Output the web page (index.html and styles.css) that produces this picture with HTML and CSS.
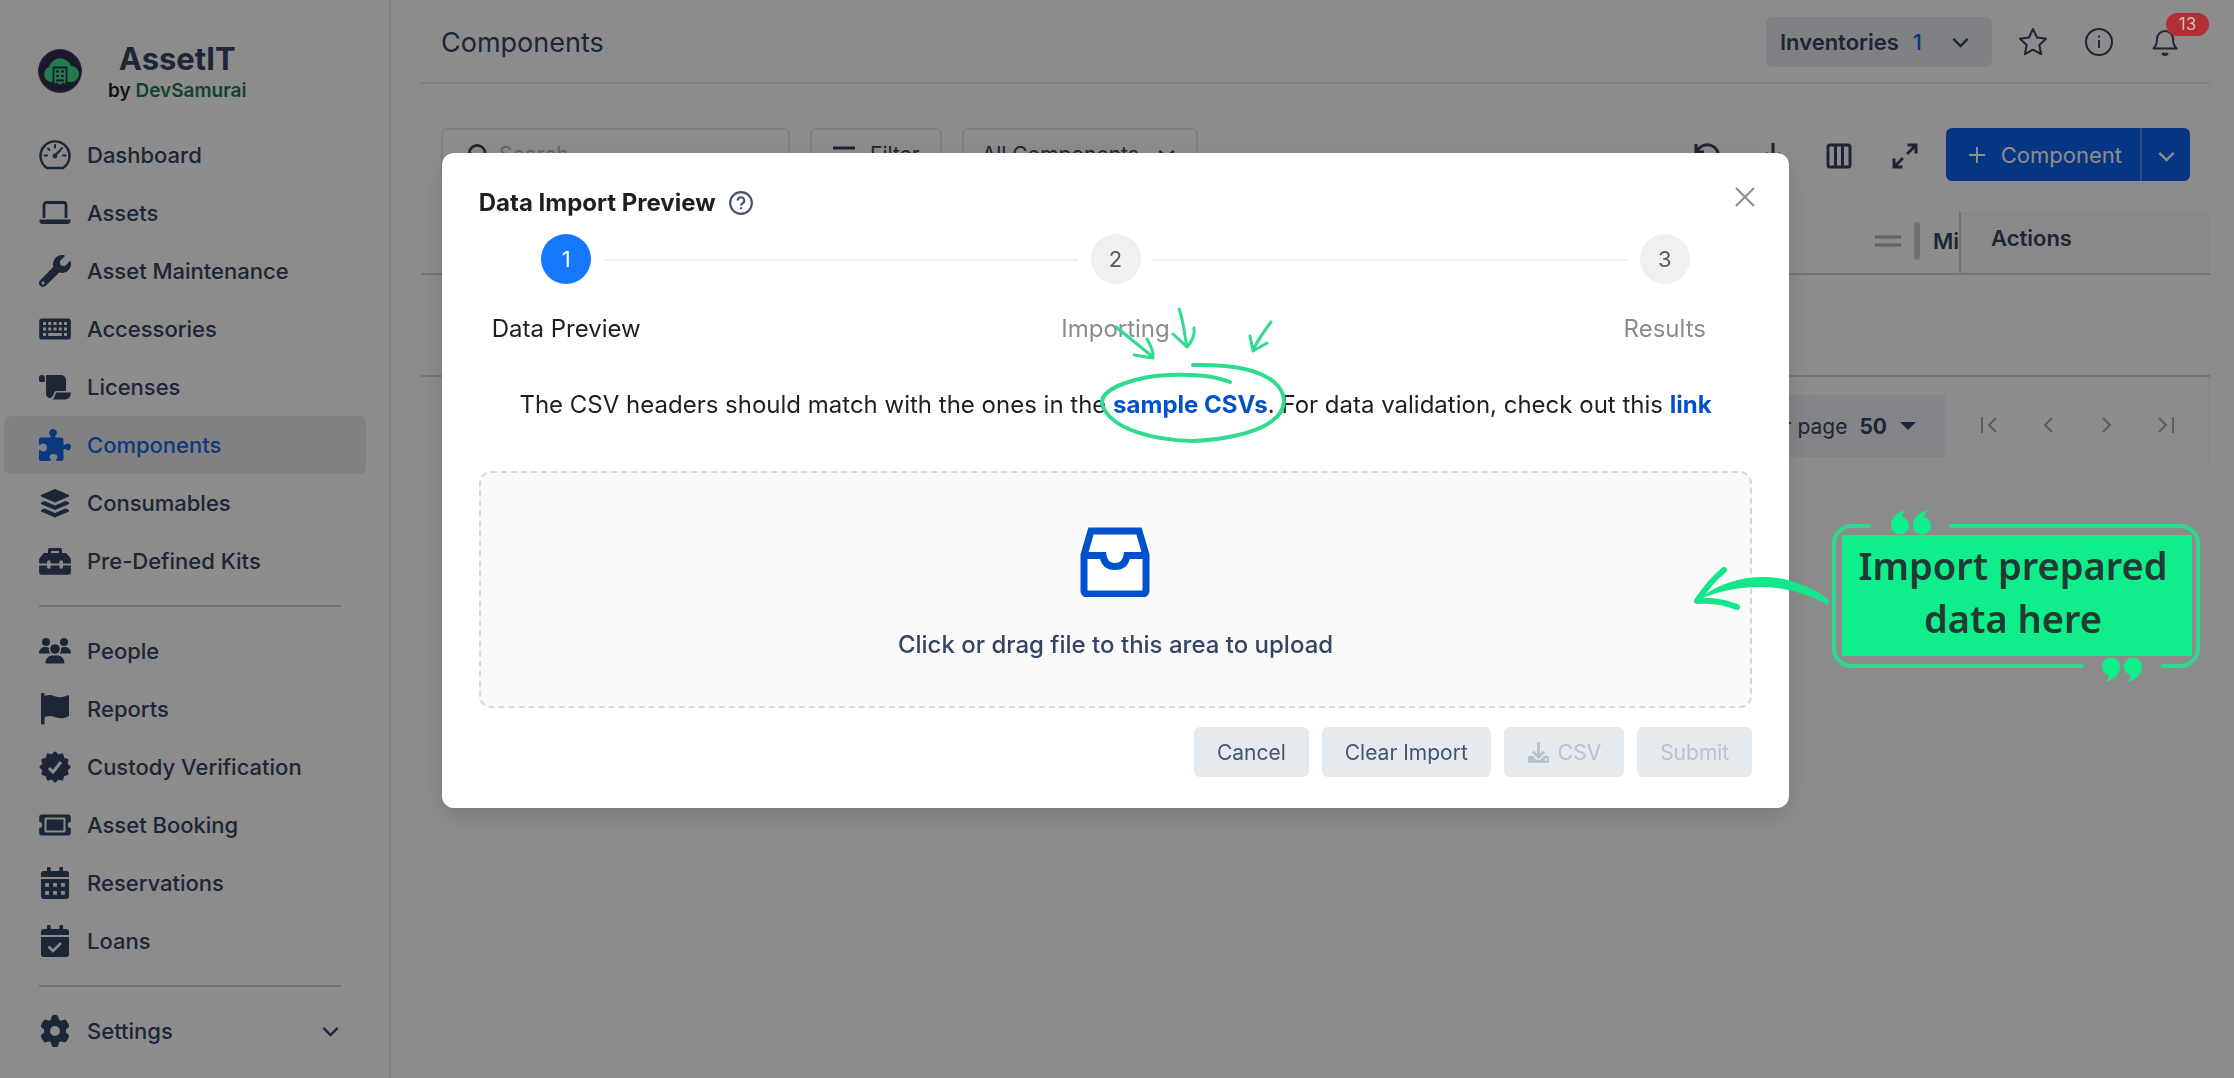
FILE: index.html
```html
<!DOCTYPE html>
<html lang="en">
<head>
  <meta charset="UTF-8" />
  <meta name="viewport" content="width=device-width, initial-scale=1.0" />
  <title>AssetIT - Components</title>
  <link rel="stylesheet" href="styles.css">
</head>
<body>
  <div class="app">
    <aside class="sidebar">
      <div class="brand">
        <svg class="brand-logo" viewBox="0 0 44 44">
          <circle cx="22" cy="22" r="21.500" fill="#302c50" stroke="#6a4a78" />
          <path d="M12 33a8 8 0 0 1-1-15 11.500 11.500 0 0 1 22-1 8 8 0 0 1 0 16z" fill="#40e08c" />
          <path d="M15.500 18.500h13v18l-3-2-3.500 2-3.500-2-3 2z" fill="#40e08c" stroke="#302c50" stroke-width="1.800" />
          <path d="M18 22.500h3M23 22.500h3M18 27h3M23 27h3M18 31.500h8" stroke="#302c50" stroke-width="2" />
        </svg>
        <div class="brand-text">
          <div class="brand-name">AssetIT</div>
          <div class="brand-by">by <span>DevSamurai</span></div>
        </div>
      </div>

      <nav class="nav">
        <a href="#"><svg class="icon" viewBox="0 0 32 32"><path d="M8 29a14.500 14.500 0 1 1 16 0z" fill="none" stroke="currentColor" stroke-width="2.400" stroke-linejoin="round" /><path d="M16 16.500l5-5" stroke="currentColor" stroke-width="2.400" stroke-linecap="round" /><circle cx="16" cy="17" r="2.400" /><path d="M16 6v2.500M9 9.500l1.500 1.500M5.500 16.500H8M24 16.500h2.500M23 9l-1 1" stroke="currentColor" stroke-width="2" stroke-linecap="round" /></svg>Dashboard</a>
        <a href="#"><svg class="icon" viewBox="0 0 32 32"><path d="M5 21V8a2.500 2.500 0 0 1 2.500-2.500h17A2.500 2.500 0 0 1 27 8v13" fill="none" stroke="currentColor" stroke-width="2.800" /><path d="M.5 22.500h31v1.500a3 3 0 0 1-3 3h-25a3 3 0 0 1-3-3z" /></svg>Assets</a>
        <a href="#"><svg class="icon" viewBox="0 0 512 512"><path fill-rule="evenodd" d="M507.700 109.100c-2.200-9-13.500-12.100-20.100-5.500l-74.400 74.400-67.900-11.300L334 98.900l74.400-74.400c6.600-6.600 3.400-17.900-5.700-20.200-47.400-11.700-99.600.9-136.600 37.900-39.600 39.600-50.500 97.100-34.100 147.200L18.700 402.800c-25 25-25 65.500 0 90.500s65.500 25 90.500 0l213.200-213.200c50.100 16.700 107.500 5.700 147.400-34.200 37.100-37.100 49.700-89.300 37.900-136.800zM64 472c-13.200 0-24-10.700-24-24s10.700-24 24-24 24 10.700 24 24-10.700 24-24 24z" /></svg>Asset Maintenance</a>
        <a href="#"><svg class="icon" viewBox="0 0 32 32"><path fill-rule="evenodd" d="M3 5.500h26a2.800 2.800 0 0 1 2.800 2.800v15.400a2.800 2.800 0 0 1-2.800 2.800H3a2.800 2.800 0 0 1-2.800-2.800V8.300A2.800 2.800 0 0 1 3 5.500zM4 9v3h3V9zm5.200 0v3h3V9zm5.300 0v3h3V9zm5.300 0v3h3V9zM25 9v3h3V9zM4 14.500v3h3v-3zm5.200 0v3h3v-3zm5.300 0v3h3v-3zm5.300 0v3h3v-3zm5.200 0v3h3v-3zM4 20v3h3v-3zm5.200 0v3h13.600v-3zM25 20v3h3v-3z" /></svg>Accessories</a>
        <a href="#"><svg class="icon" viewBox="0 0 32 32"><path d="M3 4a2.800 2.800 0 0 1 2.800 2.800V11H1.500A1.500 1.500 0 0 1 0 9.500V6.800A2.800 2.800 0 0 1 3 4zM7 4h15a5 5 0 0 1 5 5v11H17c-2 0-2 4-4 6-2 2-6 .5-6-3z" /><path d="M18 21.500h13.800c0 4-2 7-6 7H13.500c2.500-1 2.500-7 4.500-7z" /></svg>Licenses</a>
        <a href="#" class="active"><svg class="icon" viewBox="0 0 32 32"><path d="M0 11a2.500 2.500 0 0 1 2.500-2.500H11c1 0 1-1.500.2-2.300C8.500 3.500 11 0 14 0s5.500 3.500 2.800 6.200c-.8.800-.8 2.300.2 2.300h5A2.500 2.500 0 0 1 24.500 11v4c0 1 1.300 1.200 2.200.5 2.500-2.200 5.300-.3 5.300 2.500s-2.800 4.700-5.300 2.500c-.9-.7-2.200-.5-2.200.5v8.500A2.500 2.500 0 0 1 22 32h-4c-1 0-1.200-1.200-.5-2 2.500-2.800 0-5-3-5s-5.500 2.200-3 5c.7.800.5 2-.5 2H2.500A2.500 2.500 0 0 1 0 29.500V22c0-1 1.200-1.300 2-.5 3 2.500 6 0 6-3s-3-5.500-6-3c-.8.800-2 .5-2-.5z" /></svg>Components</a>
        <a href="#"><svg class="icon" viewBox="0 0 32 32"><path d="M16 2l13.500 5.800c1 .5 1 1.400 0 1.900L16 15.500 2.500 9.700c-1-.5-1-1.400 0-1.900zM5.500 14L16 18.500 26.500 14l3 1.300c1 .5 1 1.400 0 1.900L16 23 2.500 17.200c-1-.5-1-1.400 0-1.900zM5.500 21.500L16 26l10.500-4.500 3 1.300c1 .5 1 1.400 0 1.900L16 30.500 2.500 24.700c-1-.5-1-1.400 0-1.900z" /></svg>Consumables</a>
        <a href="#"><svg class="icon" viewBox="0 0 32 32"><path d="M10.500 8V4.500h11V8" fill="none" stroke="currentColor" stroke-width="3" stroke-linejoin="round" /><path d="M5 8h22l4 4.500c.6.700.9 1.500.9 2.500v3.500H24V17a1.800 1.800 0 0 0-3.600 0v1.500h-8.800V17A1.800 1.800 0 0 0 8 17v1.500H.1V15c0-1 .3-1.800.9-2.500zM.1 20.500H8V22a1.800 1.800 0 0 0 3.600 0v-1.500h8.800V22a1.800 1.800 0 0 0 3.600 0v-1.500h7.900v6.700a2.500 2.500 0 0 1-2.500 2.500H2.600a2.500 2.500 0 0 1-2.500-2.500z" /></svg>Pre-Defined Kits</a>
      </nav>
      <hr class="divider">
      <nav class="nav">
        <a href="#"><svg class="icon" viewBox="0 0 32 32"><circle cx="7" cy="7" r="4" /><circle cx="25" cy="7" r="4" /><circle cx="16" cy="14" r="4.800" /><path d="M0 18.500c0-4 2.500-6.500 6-6.500 1.500 0 3 .3 4 1-.5 2.500.2 4.500 1.500 5.500zM32 18.500c0-4-2.500-6.500-6-6.500-1.500 0-3 .3-4 1 .5 2.500-.2 4.500-1.500 5.500zM6.500 28.500c0-5 3-8 7-8h5c4 0 7 3 7 8z" /></svg>People</a>
        <a href="#"><svg class="icon" viewBox="0 0 32 32"><path d="M2 1.500a1.800 1.800 0 0 1 3.600 0V3c3-1.200 6-1.500 10 .2 4 1.600 8 1.500 12.400-.7 1.200-.5 2 .1 2 1.500v19c-5 3-9 2.800-13.500 1.200-4-1.400-7-1.400-10.900-.2V30A1.800 1.800 0 0 1 2 30z" /></svg>Reports</a>
        <a href="#"><svg class="icon" viewBox="0 0 32 32"><path d="M16 2L18.900 5 22.900 3.900 24 8 28.100 9.100 27 13 30 16 27 19 28.100 22.900 24 24 22.900 28.100 18.900 27 16 30 13.100 27 9.100 28.100 8 24 3.900 22.900 5 19 2 16 5 13 3.900 9.100 8 8 9.100 3.900 13.100 5z" stroke="currentColor" stroke-width="3" stroke-linejoin="round" /><path d="M10 17l4 4 8-10" fill="none" stroke="#fff" stroke-width="3" /></svg>Custody Verification</a>
        <a href="#"><svg class="icon" viewBox="0 0 32 32"><path fill-rule="evenodd" d="M3 5.500h26a2.800 2.800 0 0 1 2.800 2.800V13a3 3 0 0 0 0 6v4.700a2.800 2.800 0 0 1-2.800 2.800H3a2.800 2.800 0 0 1-2.800-2.800V19a3 3 0 0 0 0-6V8.300A2.800 2.800 0 0 1 3 5.500zM5.500 10v12a1.500 1.500 0 0 0 1.500 1.500h18a1.500 1.500 0 0 0 1.500-1.500V10A1.500 1.500 0 0 0 25 8.500H7A1.500 1.500 0 0 0 5.500 10zM7.500 10.500h17v11h-17z" /></svg>Asset Booking</a>
        <a href="#"><svg class="icon" viewBox="0 0 32 32"><path fill-rule="evenodd" d="M8 1.500a1.800 1.800 0 0 1 3.600 0V4h8.800V1.500a1.800 1.800 0 0 1 3.600 0V4h3a3 3 0 0 1 3 3v3H2V7a3 3 0 0 1 3-3h3zM2 12h28v17a3 3 0 0 1-3 3H5a3 3 0 0 1-3-3zm4.200 4v3.800H10V16zm7.900 0v3.800h3.800V16zm7.900 0v3.800h3.800V16zM6.200 24v3.800H10V24zm7.900 0v3.800h3.800V24zm7.900 0v3.800h3.800V24z" /></svg>Reservations</a>
        <a href="#"><svg class="icon" viewBox="0 0 32 32"><path d="M8 1.500a1.800 1.800 0 0 1 3.600 0V4h8.800V1.500a1.800 1.800 0 0 1 3.600 0V4h3a3 3 0 0 1 3 3v3H2V7a3 3 0 0 1 3-3h3zM2 12h28v17a3 3 0 0 1-3 3H5a3 3 0 0 1-3-3z" /><path d="M9.500 21.500l4.500 4.500 8-8" fill="none" stroke="#fff" stroke-width="2.600" /></svg>Loans</a>
      </nav>
      <hr class="divider">
      <nav class="nav">
        <a href="#"><svg class="icon" viewBox="0 0 32 32"><path fill-rule="evenodd" d="M12.800 1.500C13 .5 14 0 16 0s3 .5 3.200 1.500l.8 3.200 1.800 1 3.200-1c1-.3 2 .2 2.700 1.200l2 3.600c.6 1.200.5 2-.2 2.700L27 14.500v3l2.500 2.300c.7.700.8 1.500.2 2.700l-2 3.600c-.7 1-1.700 1.500-2.700 1.200l-3.200-1-1.800 1-.8 3.200c-.2 1-1.200 1.500-3.200 1.500s-3-.5-3.200-1.500l-.8-3.200-1.800-1-3.200 1c-1 .3-2-.2-2.700-1.200l-2-3.600c-.6-1.200-.5-2 .2-2.700L5 17.500v-3l-2.500-2.300c-.7-.7-.8-1.500-.2-2.700l2-3.600C5 4.900 6 4.400 7 4.700l3.200 1 1.800-1zM16 11a5 5 0 1 0 0 10 5 5 0 0 0 0-10z" /></svg>Settings<svg class="chevron" viewBox="0 0 16 16"><path d="M2 5l6 6 6-6" /></svg></a>
      </nav>
    </aside>

    <main class="main">
      <header class="header">
        <h1>Components</h1>
        <div class="header-actions">
          <button class="inventories">Inventories <span>1</span><svg class="chevron" viewBox="0 0 16 16"><path d="M2 5l6 6 6-6" /></svg></button>
          <button class="icon-btn" aria-label="Favourites"><svg viewBox="0 0 30 30"><path d="M15 2l4 8.500 9 1.200-6.600 6.300 1.700 9.200-8.100-4.500-8.100 4.500L8.600 18 2 11.700l9-1.200z" stroke-linejoin="round" /></svg></button>
          <button class="icon-btn" aria-label="Information"><svg viewBox="0 0 30 30"><circle cx="15" cy="15" r="13" /><path d="M15 13v8M15 8.500v2" /></svg></button>
          <button class="icon-btn" aria-label="Notifications"><svg viewBox="0 0 30 30"><path d="M3.500 21.500c3-3 3.500-6 3.500-9.500a8 8 0 0 1 16 0c0 3.500.5 6.500 3.500 9.500z" stroke-linejoin="round" /><path d="M12.500 26c1 2 4 2 5 0" stroke-width="3" /></svg><span class="badge">13</span></button>
        </div>
      </header>

      <div class="toolbar">
        <label class="search">
          <svg viewBox="0 0 26 26"><circle cx="11" cy="11" r="8.500" /><path d="M17 17l7 7" /></svg>
          <input type="text" placeholder="Search" aria-label="Search">
        </label>
        <button class="outline-btn"><svg class="bars" viewBox="0 0 24 24"><path d="M1 5h22M4 12h16M8 19h8" /></svg>Filter</button>
        <button class="outline-btn all-components">All Components<svg class="chevron" viewBox="0 0 16 16"><path d="M2 5l6 6 6-6" /></svg></button>
        <div class="tools">
          <button class="tool" aria-label="Undo"><svg viewBox="0 0 26 26"><path d="M2 1v8h8M3 9A11 11 0 1 1 5 20" /></svg></button>
          <button class="tool" aria-label="Download"><svg viewBox="0 0 26 26"><path d="M13 0v16M6 10l7 7 7-7M2 24h22" /></svg></button>
          <button class="tool" aria-label="Columns"><svg viewBox="0 0 26 26"><rect x="2" y="2" width="22" height="22" rx="2" /><path d="M9.500 2v22M16.500 2v22" /></svg></button>
          <button class="tool" aria-label="Expand"><svg viewBox="0 0 26 26"><path d="M15.500 2H24v8.500M24 2l-9 9M2 15.500V24h8.500M2 24l9-9" /></svg></button>
          <div class="split-btn">
            <button class="add"><svg viewBox="0 0 18 18"><path d="M9 1v16M1 9h16" /></svg>Component</button>
            <button class="more" aria-label="More"><svg class="chevron" viewBox="0 0 16 16"><path d="M2 5l6 6 6-6" /></svg></button>
          </div>
        </div>
      </div>

      <table class="table">
        <thead>
          <tr>
            <th><div class="col-min"><svg viewBox="0 0 26 12"><path d="M0 2h26M0 10h26" /></svg><i></i>Mi</div></th>
            <th class="col-actions">Actions</th>
          </tr>
        </thead>
        <tbody>
          <tr><td colspan="2"></td></tr>
        </tbody>
      </table>

      <div class="pagination">
        <button class="per-page">Rows per page <b>50</b><svg viewBox="0 0 16 8"><path d="M0 0h16L8 8z" /></svg></button>
        <button class="page-btn" aria-label="First page"><svg viewBox="0 0 18 18"><path d="M2 1v16M16 2L9 9l7 7" /></svg></button>
        <button class="page-btn" aria-label="Previous page"><svg viewBox="0 0 18 18"><path d="M13 2L6 9l7 7" /></svg></button>
        <button class="page-btn" aria-label="Next page"><svg viewBox="0 0 18 18"><path d="M5 2l7 7-7 7" /></svg></button>
        <button class="page-btn" aria-label="Last page"><svg viewBox="0 0 18 18"><path d="M16 1v16M2 2l7 7-7 7" /></svg></button>
      </div>
    </main>
  </div>

  <div class="mask">
    <section class="modal" role="dialog" aria-labelledby="modal-title">
      <button class="close" aria-label="Close"><svg viewBox="0 0 20 20"><path d="M1 1l18 18M19 1L1 19" /></svg></button>
      <h2 id="modal-title">Data Import Preview <svg viewBox="0 0 24 24"><circle cx="12" cy="12" r="10" /><path d="M9 9.800a3 3 0 1 1 4.300 2.600c-.9.500-1.300 1-1.300 2M12 16v1.800" /></svg></h2>

      <ol class="steps">
        <li class="step current"><span>1</span>Data Preview</li>
        <li class="line"></li>
        <li class="step"><span>2</span>Importing</li>
        <li class="line"></li>
        <li class="step"><span>3</span>Results</li>
      </ol>

      <p class="hint">The CSV headers should match with the ones in the <span class="marked"><a href="#">sample CSVs</a><svg class="scribble" viewBox="0 0 190 145">
            <path d="M16 25L53 55M34 53l19 3c1-7-3-14-6-19" />
            <path d="M79 7c5 13 5 25 8 37M73 32l14 13c5-5 8-13 7-19" />
            <path d="M171 20c-6 8-13 18-18 28M150 34l3 15 14-8" />
            <path class="ring" d="M93 63C135 62 160 68 174 80 188 92 187 108 172 119 155 132 120 138 92 139 55 138 10 128 2 102 0 85 40 74 70 73 95 72 115 74 130 80" />
          </svg></span>. For data validation, check out this <a href="#">link</a></p>

      <label class="dropzone">
        <input type="file" class="file-input">
        <svg viewBox="0 0 70 70"><path d="M11 4h48l7 24v36a3 3 0 0 1-3 3H7a3 3 0 0 1-3-3V28z" fill="#fff" /><path d="M5 28.500h18c1 7 5 11 12 11s11-4 12-11h18" /></svg>
        <span>Click or drag file to this area to upload</span>
      </label>

      <div class="modal-footer">
        <button class="btn">Cancel</button>
        <button class="btn">Clear Import</button>
        <button class="btn" disabled><svg viewBox="0 0 24 24"><path d="M12 1v15M6 11l6 6 6-6" fill="none" stroke="currentColor" stroke-width="3" /><path fill-rule="evenodd" d="M3 15.500h3l4 4h4l4-4h3a2 2 0 0 1 2 2V21a2 2 0 0 1-2 2H3a2 2 0 0 1-2-2v-3.500a2 2 0 0 1 2-2zM18.500 18v2.500H21V18z" /></svg>CSV</button>
        <button class="btn" disabled>Submit</button>
      </div>
    </section>

    <div class="callout">
      <svg viewBox="0 0 508 200">
        <path class="frame" d="M175 18h-17a18 18 0 0 0-18 18v104a18 18 0 0 0 18 18h230M257 18h229a18 18 0 0 1 18 18v104a18 18 0 0 1-18 18h-17" />
        <path d="M212 2C200 5 197 12 197 18a9 8.500 0 0 0 18 0c0-5-3-8-7-9 0-3 2-5 4-7zM234 2c-12 3-15 10-15 16a9 8.500 0 0 0 18 0c0-5-3-8-7-9 0-3 2-5 4-7z" />
        <path d="M411 174c12-3 15-10 15-16a9 8.500 0 0 0-18 0c0 5 3 8 7 9 0 3-2 5-4 7zM433 174c12-3 15-10 15-16a9 8.500 0 0 0-18 0c0 5 3 8 7 9 0 3-2 5-4 7z" />
        <path class="arrow" d="M7 89C42 64 92 60 135 92l-1 5C95 75 50 74 8 90z" />
        <path class="arrow-head" d="M30 62C20 70 9 84 3 93c12-1 28 1 40 6" />
      </svg>
      <p>Import prepared<br>data here</p>
    </div>
  </div>
</body>
</html>
```
FILE: styles.css
```css
* {
  box-sizing: border-box;
}

body {
  margin: 0;
  font-family: Inter, "Liberation Sans", sans-serif;
  font-size: 22px;
  color: #344563;
  background: #fff;
  overflow: hidden;
}

a {
  color: #0052cc;
  text-decoration: none;
}

button {
  font: inherit;
  color: inherit;
  border: none;
  background: none;
  padding: 0;
  cursor: pointer;
}

svg {
  flex: none;
}

.app {
  display: flex;
  min-height: 100vh;
}

.chevron {
  width: 19px;
  height: 19px;
  fill: none;
  stroke: currentColor;
  stroke-width: 2;
}

/* Sidebar */
.sidebar {
  flex: none;
  width: 391px;
  border-right: 2px solid #e4e4e4;
}

.brand {
  display: flex;
  align-items: center;
  gap: 26px;
  height: 126px;
  padding: 0 0 0 38px;
}

.brand-logo {
  width: 44px;
  height: 44px;
  margin-top: 16px;
}

.brand-text {
  margin-top: 20px;
  text-align: center;
}

.brand-name {
  font-size: 31px;
  line-height: 36px;
  font-weight: 700;
}

.brand-by {
  font-size: 19px;
  line-height: 28px;
  font-weight: 600;
  color: #262626;
}

.brand-by span {
  color: #1f7a4d;
}

.nav {
  padding: 0 23px 0 4px;
}

.nav a {
  display: flex;
  align-items: center;
  gap: 16px;
  height: 58px;
  padding: 0 26px 0 35px;
  border-radius: 6px;
  font-weight: 500;
  color: #344563;
}

.nav a.active {
  background: #ebebee;
  color: #1468e8;
}

.icon {
  width: 32px;
  height: 32px;
  fill: currentColor;
}

.nav .chevron {
  margin-left: auto;
}

.divider {
  margin: 15px 48px 15px 39px;
  border: none;
  border-top: 2px solid #d4d4d4;
}

/* Page */
.main {
  flex: 1;
  padding: 0 24px 0 30px;
}

.header {
  display: flex;
  justify-content: space-between;
  align-items: center;
  height: 84px;
  padding: 2px 12px 0 20px;
  border-bottom: 2px solid #ebebeb;
}

.header h1 {
  margin: 0;
  font-size: 27px;
  font-weight: 400;
}

.header-actions {
  display: flex;
  align-items: center;
}

.inventories {
  display: flex;
  align-items: center;
  height: 50px;
  margin-right: 8px;
  padding: 0 22px 0 14px;
  border-radius: 6px;
  background: #e7ebf0;
  font-weight: 600;
}

.inventories span {
  margin: 0 29px 0 14px;
  color: #1468e8;
  font-weight: 500;
}

.icon-btn {
  position: relative;
  width: 66px;
  height: 50px;
}

.icon-btn svg {
  width: 30px;
  height: 30px;
  vertical-align: middle;
  fill: none;
  stroke: currentColor;
  stroke-width: 2;
}

.badge {
  position: absolute;
  top: -4px;
  left: 34px;
  z-index: 20;
  width: 43px;
  height: 23px;
  border-radius: 12px;
  background: #b03035;
  color: #d4bcbc;
  font-size: 17px;
  line-height: 23px;
}

.toolbar {
  display: flex;
  gap: 20px;
  height: 53px;
  margin: 44px 20px 31px;
}

.search {
  display: flex;
  align-items: center;
  gap: 6px;
  width: 349px;
  padding: 0 24px;
  border: 2px solid #e8e8e8;
  border-radius: 6px;
}

.search svg {
  width: 24px;
  height: 24px;
  fill: none;
  stroke: currentColor;
  stroke-width: 3;
}

.search input {
  width: 100%;
  border: none;
  outline: none;
  background: none;
  font: inherit;
  font-size: 21px;
}

.search input::placeholder {
  color: #b4b8c0;
}

.outline-btn {
  display: flex;
  align-items: center;
  gap: 14px;
  padding: 0 20px;
  border: 2px solid #e8e8e8;
  border-radius: 6px;
  font-size: 21px;
}

.all-components {
  padding-left: 18px;
  gap: 18px;
}

.bars {
  width: 24px;
  height: 24px;
  stroke: currentColor;
  stroke-width: 3;
}

.tools {
  display: flex;
  margin-left: auto;
}

.tool {
  width: 66px;
}

.tool svg {
  width: 26px;
  height: 26px;
  vertical-align: middle;
  fill: none;
  stroke: currentColor;
  stroke-width: 3;
}

.split-btn {
  display: flex;
  margin-left: 8px;
  border-radius: 6px;
  background: #0c62ee;
  color: #fff;
}

.add {
  display: flex;
  align-items: center;
  gap: 15px;
  padding: 0 18px 0 22px;
}

.add svg {
  width: 18px;
  height: 18px;
  stroke: currentColor;
  stroke-width: 2;
}

.more {
  width: 50px;
  border-left: 2px solid #4f8ff5;
}

.more svg {
  vertical-align: middle;
}

.table {
  width: 100%;
  border-collapse: collapse;
}

.table th {
  height: 62px;
  padding: 0 0 4px;
  border-bottom: 2px solid #d4d4d4;
  font-weight: 600;
}

.table td {
  height: 102px;
  border-bottom: 2px solid #d4d4d4;
}

.col-min {
  display: flex;
  justify-content: flex-end;
  align-items: center;
  gap: 13px;
}

.col-min svg {
  width: 26px;
  height: 12px;
  stroke: #b4b4b4;
  stroke-width: 3;
}

.col-min i {
  width: 6px;
  height: 38px;
  border-radius: 3px;
  background: #cfcfd2;
}

.table .col-actions {
  width: 250px;
  padding: 0 30px 10px;
  border-left: 2px solid #d0d0d0;
  background: #fafafa;
  text-align: left;
}

.pagination {
  display: flex;
  justify-content: flex-end;
  height: 88px;
  padding: 18px 13px 0 0;
  border-right: 2px solid #f6f6f6;
}

.pagination svg {
  width: 18px;
  height: 18px;
}

.per-page {
  display: flex;
  align-items: center;
  gap: 12px;
  height: 62px;
  margin-right: 14px;
  padding: 0 28px;
  background: #f0f3f7;
  font-size: 21px;
}

.per-page svg {
  height: 8px;
  fill: currentColor;
}

.per-page b {
  font-weight: 700;
}

.page-btn {
  width: 59px;
  height: 62px;
  fill: none;
  stroke: #a8a8a8;
  stroke-width: 2;
}

/* Import dialog */
.mask {
  position: fixed;
  inset: 0;
  z-index: 10;
  padding: 153px 3px 0 0;
  background: rgba(0, 0, 0, 0.45);
}

.modal {
  position: relative;
  width: 60.4%;
  margin: 0 auto;
  padding: 34px 37px 31px;
  border-radius: 12px;
  background: #fff;
  box-shadow: 0 9px 28px rgba(0, 0, 0, 0.15);
  color: #1f1f1f;
}

.close {
  position: absolute;
  top: 34px;
  right: 34px;
}

.close svg {
  display: block;
  width: 20px;
  height: 20px;
  stroke: #8c8c8c;
  stroke-width: 2;
}

.modal h2 {
  display: flex;
  align-items: center;
  gap: 12px;
  margin: 0 0 15px;
  font-size: 24px;
  line-height: 32px;
  font-weight: 700;
}

.modal h2 svg {
  width: 26px;
  height: 26px;
  fill: none;
  stroke: #44546f;
  stroke-width: 2;
}

.steps {
  display: flex;
  margin: 0 0 45px;
  padding: 0;
  list-style: none;
}

.step {
  width: 175px;
  text-align: center;
  font-size: 24px;
  line-height: 30px;
  color: #8c8c8c;
}

.step span {
  display: block;
  width: 50px;
  margin: 0 auto 30px;
  border-radius: 50%;
  background: #f0f0f0;
  color: #595959;
  font-size: 22px;
  line-height: 50px;
}

.step.current {
  color: #1f1f1f;
}

.step.current span {
  background: #1677ff;
  color: #fff;
}

.line {
  flex: 1;
  height: 2px;
  margin: 25px -50px 0;
  background: #f0f0f0;
}

.hint {
  margin: 0 0 50px;
  text-align: center;
  font-size: 24px;
  line-height: 32px;
}

.hint a {
  font-weight: 700;
}

.marked {
  position: relative;
}

.scribble {
  position: absolute;
  top: -88px;
  left: -13px;
  width: 190px;
  height: 145px;
  fill: none;
  stroke: #2fdc8f;
  stroke-width: 3;
  stroke-linecap: round;
  stroke-linejoin: round;
}

.ring {
  stroke-width: 4;
}

.dropzone {
  display: flex;
  flex-direction: column;
  align-items: center;
  gap: 32px;
  height: 237px;
  padding-top: 54px;
  border: 2px dashed #d9d9d9;
  border-radius: 12px;
  background: #fafafa;
  color: #344563;
  font-size: 24px;
  line-height: 32px;
  font-weight: 500;
  cursor: pointer;
}

.dropzone svg {
  width: 70px;
  height: 70px;
  fill: none;
  stroke: #0052cc;
  stroke-width: 7;
}

.file-input {
  display: none;
}

.modal-footer {
  display: flex;
  justify-content: flex-end;
  gap: 13px;
  margin-top: 19px;
}

.btn {
  display: flex;
  align-items: center;
  gap: 8px;
  height: 50px;
  padding: 0 23px;
  border-radius: 6px;
  background: #e5eaef;
  color: #44546f;
  font-size: 21px;
}

.btn:disabled {
  color: #b8c2ce;
}

.btn svg {
  width: 23px;
  height: 23px;
  fill: currentColor;
}

/* Note beside the dialog */
.callout {
  position: absolute;
  top: 535px;
  right: 42px;
  width: 350px;
  background: #10ee8c;
  color: #213a33;
}

.callout svg {
  position: absolute;
  top: -27px;
  left: -148px;
  width: 508px;
  height: 200px;
  fill: #10ee8c;
}

.callout p {
  margin: 0;
  padding: 4px 8px 11px 0;
  text-align: center;
  font-family: "Noto Sans", sans-serif;
  font-size: 38px;
  line-height: 53px;
  font-weight: 600;
}

.callout .frame {
  fill: none;
  stroke: #2fd98f;
  stroke-width: 4;
  stroke-linecap: round;
}

.callout .arrow {
  fill: #14e68c;
}

.callout .arrow-head {
  fill: none;
  stroke: #14e68c;
  stroke-width: 6;
  stroke-linecap: round;
  stroke-linejoin: round;
}
```
